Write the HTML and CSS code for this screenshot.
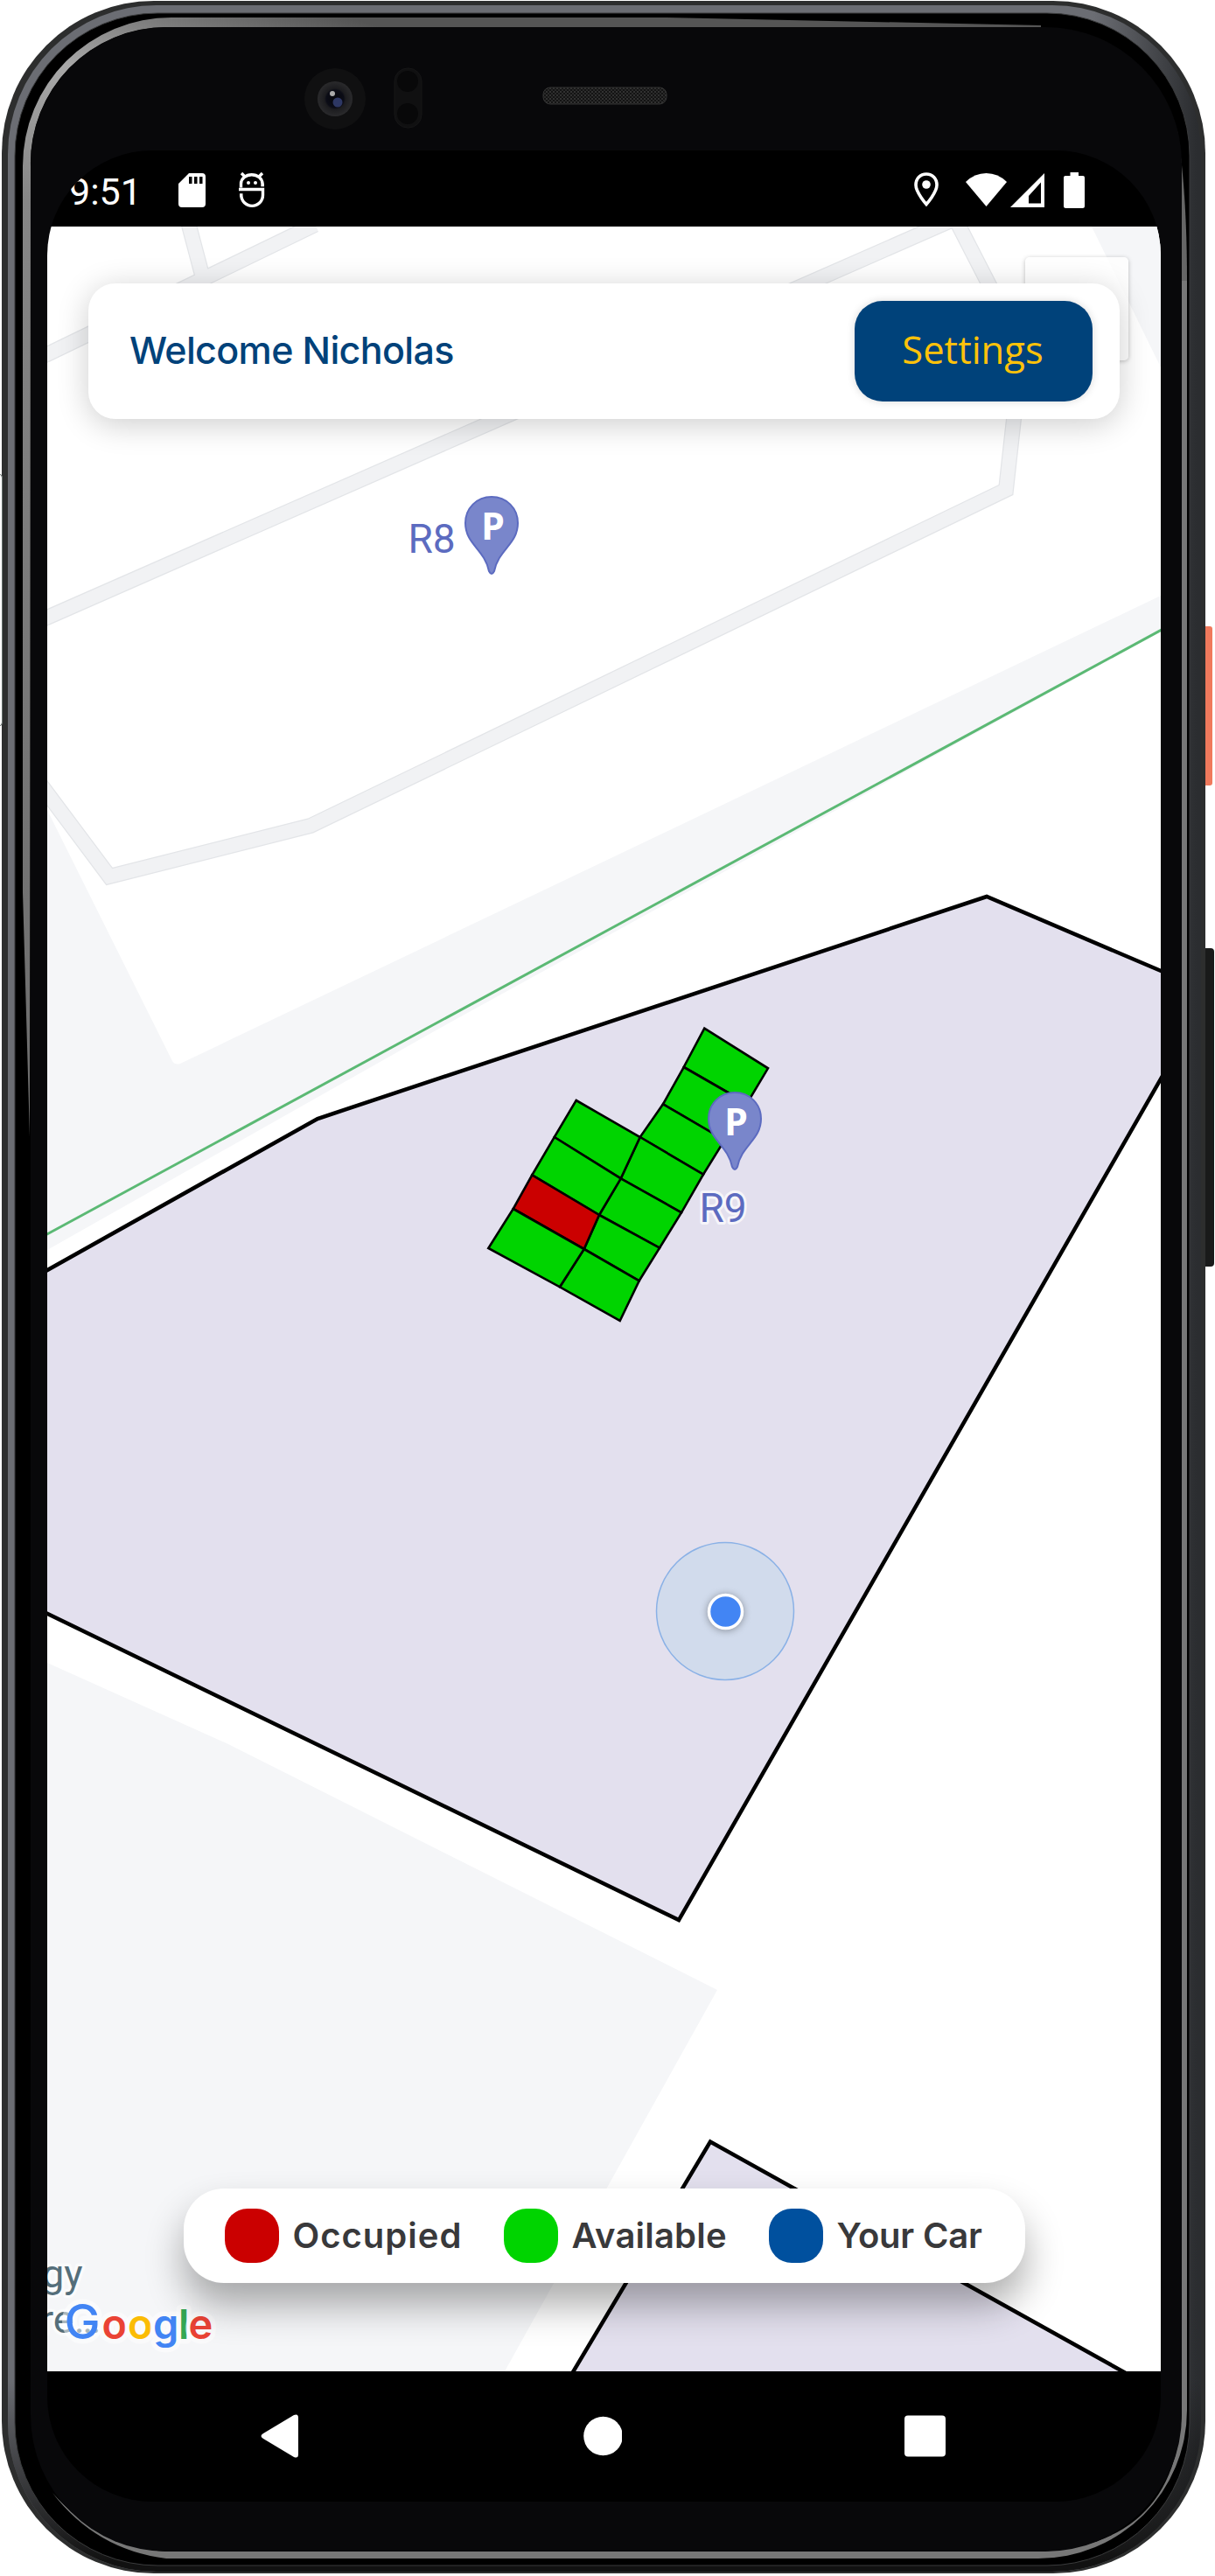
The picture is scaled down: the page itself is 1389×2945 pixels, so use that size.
FILE: index.html
```html
<!DOCTYPE html>
<html lang="en">
<head>
<meta charset="utf-8">
<title>Parking map</title>
<link rel="stylesheet" href="styles.css">
</head>
<body>
<div class="phone">
  <svg class="frame" viewBox="0 0 1389 2945" aria-hidden="true">
    <defs>
      <linearGradient id="rim" gradientUnits="userSpaceOnUse" x1="0" y1="0" x2="1389" y2="0">
        <stop offset="0" stop-color="#6b6d73"/><stop offset=".9" stop-color="#6b6d73"/><stop offset=".985" stop-color="#2b2d30"/><stop offset="1" stop-color="#2b2d30"/>
      </linearGradient>
      <linearGradient id="shade" gradientUnits="userSpaceOnUse" x1="0" y1="2720" x2="0" y2="2930">
        <stop offset="0" stop-color="#111" stop-opacity="0"/><stop offset="1" stop-color="#111"/>
      </linearGradient>
      <linearGradient id="edge" gradientUnits="userSpaceOnUse" x1="34" y1="1200" x2="400" y2="20">
        <stop offset="0" stop-color="#6e6e6e"/><stop offset=".75" stop-color="#868686"/><stop offset=".88" stop-color="#a8a8a8"/><stop offset="1" stop-color="#555"/>
      </linearGradient>
      <radialGradient id="lens"><stop offset="0" stop-color="#05060c"/><stop offset=".5" stop-color="#0b0c16"/><stop offset=".6" stop-color="#1c1c1f"/><stop offset="1" stop-color="#2a2a2c"/></radialGradient>
      <pattern id="mesh" width="4" height="4" patternUnits="userSpaceOnUse"><rect width="4" height="4" fill="#141414"/><circle cx="1" cy="1" r="1" fill="#3a3a3a"/><circle cx="3" cy="3" r="1" fill="#303030"/></pattern>
    </defs>
    <rect x="1370" y="716" width="16" height="182" rx="3" fill="#f0795c"/>
    <rect x="1370" y="1084" width="18" height="364" rx="4" fill="#191a1a"/>
    <rect x="2" y="1" width="1376" height="2941" rx="174" fill="#2d2e2e"/>
    <rect x="9" y="6" width="1364" height="2934" rx="170" fill="url(#rim)"/>
    <rect x="9" y="6" width="1364" height="2934" rx="170" fill="url(#shade)"/>
    <rect x="17" y="15" width="1343" height="2918" rx="163" fill="#000" stroke="#3a3b3c" stroke-width="1"/>
    <path d="M34 1300 L26 1020 V190 A170 170 0 0 1 196 20 H760 L1190 29 V31 H190 A155 155 0 0 0 35 190 Z" fill="url(#edge)"/>
    <path d="M1351 320 H1357 V2755 A170 170 0 0 1 1187 2925 H190 Q110 2915 60 2850 Q115 2912 190 2917 H1187 Q1345 2910 1351 2755 Z" fill="#777"/>
    <path d="M1346 150 Q1357 220 1357 321 H1351 Z" fill="#666"/>
    <rect x="35" y="31" width="1316" height="2886" rx="156" fill="#08080a"/>
    <rect x="-6" y="542" width="8.500" height="288" rx="4" fill="#fff" stroke="#66706c"/>
    <circle cx="383" cy="113" r="35" fill="#101011"/>
    <circle cx="383" cy="113" r="20" fill="url(#lens)"/>
    <circle cx="386" cy="117" r="5.500" fill="#2d3763"/>
    <circle cx="380" cy="107" r="3" fill="#aaa"/>
    <rect x="451" y="78" width="31" height="68" rx="15" fill="#101011" stroke="#161617"/>
    <circle cx="466" cy="93" r="12" fill="#080809"/><circle cx="466" cy="130" r="12" fill="#080809"/>
    <rect x="621" y="100" width="141" height="19" rx="8" fill="url(#mesh)" stroke="#333"/>
  </svg>

  <main class="screen">
    <header class="status">
      <div class="status-group">
        <span class="clock">9:51</span>
        <svg class="sd" viewBox="0 0 31 39"><path fill="#fff" fill-rule="evenodd" d="M12 0H27Q31 0 31 4V35Q31 39 27 39H4Q0 39 0 35V12ZM12 4V12H15.500V4ZM18 4V12H21.500V4ZM24 4V12H27.500V4Z"/></svg>
        <svg class="bug" viewBox="0 0 30 40"><g fill="none" stroke="#fff" stroke-width="3.400"><path d="M2.500 17.500V13A12 10 0 0 1 27 13V14.500H29"/><path d="M0 19.500H27.500V26A12 12 0 0 1 2.800 26H1"/><path d="M3 1L7 5M27 1L23 5"/></g><circle cx="11" cy="12" r="2" fill="#fff"/><circle cx="19" cy="12" r="2" fill="#fff"/></svg>
      </div>
      <div class="status-group">
        <svg class="pin" viewBox="0 0 28 40"><path d="M14 2C7 2 2 7 2 14.500 2 23 14 36.500 14 36.500S26 23 26 14.500C26 7 21 2 14 2Z" fill="none" stroke="#fff" stroke-width="3.600"/><circle cx="14" cy="14" r="4.800" fill="#fff"/></svg>
        <svg class="wifi" viewBox="0 0 47 40"><path fill="#fff" d="M0 11Q10 1 23.500 1T47 11L23.500 39Z"/></svg>
        <svg class="signal" viewBox="0 0 39 40"><path fill="#fff" fill-rule="evenodd" d="M39 1V40H0ZM35 11.500V35.500H21V27Z"/></svg>
        <svg class="battery" viewBox="0 0 24 41"><path fill="#fff" d="M7.500 0H17V4H22Q24 4 24 6V38.500Q24 41 21.500 41H2.500Q0 41 0 38.500V6Q0 4 2 4H7.500Z"/></svg>
      </div>
    </header>

    <section class="map">
      <svg class="map-canvas" viewBox="54 259 1273 2452">
        <g fill="#f5f6f8">
          <path d="M54 926 197 1213Q200 1218 206 1216L1327 681V722L500 1177 54 1429Z"/>
          <path d="M1248 259 1327 420V259Z"/>
          <path d="M54 1901 259 1993 820 2275 577 2711H54Z"/>
        </g>
        <g fill="none" stroke-linejoin="miter">
          <g stroke="#e3e5e8" stroke-width="18">
            <path d="M40 411 54 405 360 257"/><path d="M214 250 232 318"/>
            <path d="M40 712 1092 250 1168 398 1150 560 355 944 125 1002 54 907 40 888"/>
          </g>
          <g stroke="#f1f2f4" stroke-width="15.500">
            <path d="M40 411 54 405 360 257"/><path d="M214 250 232 318"/>
            <path d="M40 712 1092 250 1168 398 1150 560 355 944 125 1002 54 907 40 888"/>
          </g>
        </g>
        <path d="M40 1418.500 1340 713.500" stroke="#5bb974" stroke-width="3"/>
        <g fill="#e3e0ee" stroke="#000" stroke-width="4.500">
          <path d="M30 1465.500 363 1279 1128 1025 1360 1124V1176L776 2195 30 1833Z"/>
          <path d="M640 2737 812 2448.500 1330 2737Z"/>
        </g>
        <g fill="#00d400" stroke="#000" stroke-width="2.600">
          <path d="M805.300 1175.700 878 1221.300 854 1261.500 781.700 1220Z"/>
          <path d="M781.700 1220 854 1261.500 828.300 1303.500 758 1262.300Z"/>
          <path d="M758 1262.300 828.300 1303.500 804 1342.700 731.700 1300Z"/>
          <path d="M731.700 1300 804 1342.700 779 1386.300 709.700 1347.300Z"/>
          <path d="M709.700 1347.300 779 1386.300 754 1426.700 685 1389Z"/>
          <path d="M685 1389 754 1426.700 730.700 1464.300 667.700 1428Z"/>
          <path d="M667.700 1428 730.700 1464.300 708.700 1510 640 1471.300Z"/>
          <path d="M658.700 1258 731.700 1300 709.700 1347.300 633.700 1300Z"/>
          <path d="M633.700 1300 709.700 1347.300 685 1389 608.300 1343.300Z"/>
          <path d="M608.300 1343.300 685 1389 667.700 1428 586.700 1382Z" fill="#cb0000"/>
          <path d="M586.700 1382 667.700 1428 640 1471.300 558.300 1427Z"/>
        </g>
        <defs>
          <g id="parking">
            <path d="M0-30C-17-30-30-17-30 0-30 24-8 30-3 55Q0 61 3 55C8 30 30 24 30 0 30-17 17-30 0-30Z" fill="#7986cb" stroke="#5c6bc0" stroke-width="2"/>
            <text class="pin-letter" x="-12" y="18.500">P</text>
          </g>
        </defs>
        <use href="#parking" x="562" y="598"/>
        <use href="#parking" x="840" y="1279"/>
        <text class="place" x="466.500" y="631.500">R8</text>
        <text class="place" x="799.500" y="1397">R9</text>
        <circle cx="829" cy="1842" r="78.500" fill="#d1dbec" stroke="#8ab1e6" stroke-width="1.500"/>
        <circle class="dot" cx="829.500" cy="1842.500" r="19" fill="#4285f4" stroke="#fff" stroke-width="3.500"/>
        <text class="poi" x="94.500" y="2615" text-anchor="end">gy</text>
        <text class="poi" x="46" y="2666.500">re…</text>
        <text class="brand" y="2673.500"><tspan class="brand-cap" x="73.500" fill="#4285f4">G</tspan><tspan x="116.500" fill="#ea4335">o</tspan><tspan x="146" fill="#fbbc05">o</tspan><tspan x="175" fill="#4285f4">g</tspan><tspan x="204" fill="#34a853">l</tspan><tspan x="215.500" fill="#ea4335">e</tspan></text>
      </svg>
      <div class="zoom-control">+</div>
      <div class="overlay">
        <div class="welcome">
          <h1>Welcome Nicholas</h1>
          <button class="settings">Settings</button>
        </div>
        <ul class="legend">
          <li><i class="swatch occupied"></i><span class="t-occupied">Occupied</span></li>
          <li><i class="swatch available"></i><span class="t-available">Available</span></li>
          <li><i class="swatch yours"></i><span class="t-yours">Your Car</span></li>
        </ul>
      </div>
    </section>

    <nav class="nav">
      <svg viewBox="0 0 44 50"><path d="M3 22 38 1Q43-1 43 4V46Q43 51 38 49L3 28Q-2 25 3 22Z" fill="#fff"/></svg>
      <svg viewBox="0 0 46 50"><circle cx="24.500" cy="25" r="22.300" fill="#fff"/></svg>
      <svg viewBox="0 0 47 50"><rect y="1.500" width="47" height="47" rx="4" fill="#fff"/></svg>
    </nav>
  </main>
</div>
</body>
</html>
```
FILE: styles.css
```css
* { box-sizing: border-box; }
body { margin: 0; background: #fff; font-family: Inter, sans-serif; }
.phone { position: relative; width: 1389px; height: 2945px; padding: 172px 62px 0 54px; overflow: hidden; }
.frame { position: absolute; inset: 0; width: 1389px; height: 2945px; }
.screen { position: relative; display: flex; flex-direction: column; width: 1273px; height: 2688px; border-radius: 120px; overflow: hidden; background: #000; }

.status { flex: 0 0 87px; display: flex; justify-content: space-between; align-items: flex-start; padding: 25px 87px 0 25px; }
.status-group { display: flex; align-items: flex-start; }
.status svg { display: block; }
.clock { width: 125px; margin-top: -2px; font: 43px/48px Roboto, sans-serif; color: #fff; }
.sd { width: 31px; height: 39px; margin: 1px 38px 0 0; }
.bug { width: 30px; height: 40px; overflow: visible; }
.pin { width: 28px; height: 40px; margin-right: 31px; }
.wifi { width: 47px; height: 40px; margin-right: 4px; }
.signal { width: 39px; height: 40px; margin-right: 22px; }
.battery { width: 24px; height: 41px; }

.map { position: relative; flex: 0 0 2452px; background: #fff; overflow: hidden; }
.map-canvas { position: absolute; inset: 0; width: 1273px; height: 2452px; }
.place { font: 46px Roboto, sans-serif; fill: #5c6bc0; stroke: rgba(255, 255, 255, .7); stroke-width: 6px; stroke-linejoin: round; paint-order: stroke; }
.pin-letter { font: 700 43px "Open Sans", sans-serif; fill: #fff; }
.poi { font: 45px Roboto, sans-serif; fill: #546e7a; stroke: #fafbfc; stroke-width: 7px; stroke-linejoin: round; paint-order: stroke; }
.brand { font: 600 47px Inter, sans-serif; stroke: rgba(255, 255, 255, .5); stroke-width: 11px; stroke-linejoin: round; paint-order: stroke; }
.brand-cap { font-size: 55px; font-weight: 500; }
.dot { filter: drop-shadow(0 1px 4px rgba(0, 0, 0, .35)); }
.zoom-control { position: absolute; left: 1118px; top: 35px; width: 118px; height: 118px; border-radius: 5px; background: rgba(255, 255, 255, .75); box-shadow: 0 1px 5px rgba(0, 0, 0, .25); color: #666; font: 52px/84px Inter, sans-serif; text-align: center; }

.overlay { position: relative; height: 100%; display: flex; flex-direction: column; justify-content: space-between; align-items: center; padding: 65px 47px 101px; }
.welcome { display: flex; align-items: center; justify-content: space-between; width: 1179px; height: 155px; padding: 0 31px 0 47px; border-radius: 31px; background: #fff; box-shadow: 0 6px 36px rgba(0, 0, 0, .2); }
.welcome h1 { margin: -3px 0 0; font-size: 43px; line-height: 52px; font-weight: 500; letter-spacing: -.65px; color: #00427a; }
.settings { width: 272px; height: 115px; padding: 0 2px 3px 0; border: 0; border-radius: 32px; background: #00427a; color: #ffc20a; font: 43.5px/52px "Open Sans", sans-serif; box-shadow: 0 0 10px rgba(0, 0, 0, .15); }

.legend { display: flex; align-items: center; width: 962px; height: 108px; margin: 0; padding: 0 0 0 47px; border-radius: 46px; background: #fff; list-style: none; box-shadow: 0 26px 44px rgba(0, 0, 0, .32); }
.legend li { display: flex; align-items: center; gap: 16px; font-size: 40px; line-height: 50px; font-weight: 600; color: #39393b; white-space: nowrap; }
.swatch { width: 62px; height: 62px; border-radius: 26px; }
.occupied { background: #cb0000; }
.available { background: #00d400; }
.yours { background: #00509e; }
.t-occupied { width: 241px; letter-spacing: 1px; }
.t-available { width: 225px; letter-spacing: .2px; }
.t-yours { letter-spacing: -.2px; }

.nav { flex: 1; display: flex; justify-content: space-between; align-items: flex-start; padding: 49px 246px 0 244px; }
.nav svg { height: 50px; }
```
